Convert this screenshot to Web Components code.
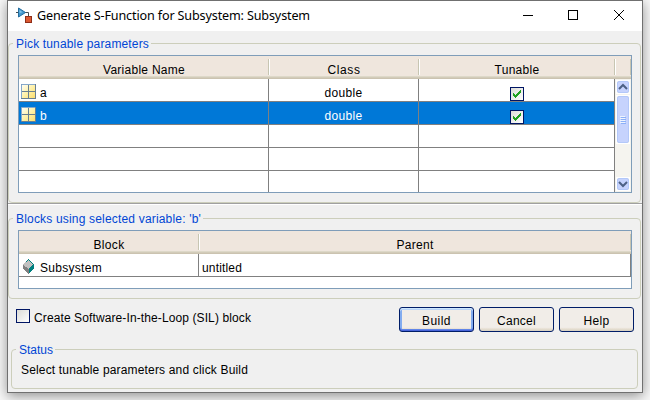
<!DOCTYPE html>
<html lang="en"><head><meta charset="utf-8"><title>Generate S-Function</title>
<style>
html,body{margin:0;width:650px;height:400px;overflow:hidden}
body{background:#f8f8f8;font:12px/15px "Liberation Sans",Arial,sans-serif;color:#000;display:flex;padding-left:7px;box-sizing:border-box}
</style></head><body>
<sfun-window></sfun-window>
<script>
function define(name, html, init) {
  const t = document.createElement('template');
  t.innerHTML = html;
  customElements.define(name, class extends HTMLElement {
    constructor() { super(); this.attachShadow({mode:'open'}).append(t.content.cloneNode(true)); }
    connectedCallback() { if (init) init.call(this, this.shadowRoot); }
  });
}

// Spreads its text evenly to the width given in the "w" attribute.
define('fit-text', `<style>:host{display:inline-block;white-space:pre;flex:none}span{display:inline-block}</style><span><slot></slot></span>`, function (r) {
  const w = +this.getAttribute('w'), s = r.querySelector('span');
  if (!w) return;
  this.style.width = w + 'px';
  const n = this.textContent.length;
  s.style.letterSpacing = (w - s.getBoundingClientRect().width) / n + 'px';
});

define('group-box', `<style>
:host{display:block;box-sizing:border-box;flex:none}
fieldset{margin:0;padding:0;border:1px solid #cccebb;border-radius:4px;height:100%;box-sizing:border-box;min-width:0}
legend{color:#0046d5;margin-left:4px;padding:0 2px 0 3px;height:15px;line-height:16px;white-space:nowrap}
</style><fieldset><legend><slot name="legend"></slot></legend><slot></slot></fieldset>`);

define('check-box', `<style>:host{display:block;width:14px;height:14px;flex:none}svg{display:none}:host([checked]) svg{display:block}
div{width:14px;height:14px;box-sizing:border-box;border:1px solid #001564;background:linear-gradient(135deg,#dcdcd7,#fff)}</style>
<div><svg width="12" height="12" shape-rendering="crispEdges"><path d="M2 5h1v1h1v1h1v-1h1v-1h1v-1h1v-1h1v-1h1v3h-1v1h-1v1h-1v1h-1v1h-1v1h-1v-1h-1v-1h-1z" fill="#21a121"/></svg></div>`);

define('push-button', `<style>:host{display:block;width:75px;height:25px;flex:none}
button{display:block;width:100%;height:100%;box-sizing:border-box;padding:3px 0 0;margin:0;border:1px solid #001d68;border-radius:3px;background:linear-gradient(#f1ede8 0 84%,#e8e1d5 90%,#d6cfbf);font:inherit;color:#000;line-height:15px}
:host([primary]) button{box-shadow:inset 0 1px #cee7ff,inset 0 -1px #4764da,inset 0 2px #b9d4f7,inset 0 -2px #6286e8,inset 2px 0 #83acef,inset -2px 0 #83acef}
</style><button><slot></slot></button>`);

define('head-cell', `<style>:host{display:flex;justify-content:center;position:relative;height:23px;padding-top:7px;box-sizing:border-box;
background:linear-gradient(#efe6dd 0 20px,#ddd8c8 20px 21px,#d2cbb9 21px 22px,#cbc3b0 22px);border:0}
:host::after{content:"";position:absolute;right:-1px;top:3px;width:1px;height:16px;background:#c7c5b2;border-right:1px solid #fff;z-index:1}
:host([last])::after{right:0;border:0}
</style><slot></slot>`);

define('grid-cell', `<style>:host{display:flex;height:23px;box-sizing:border-box;border-right:1px solid #808080;border-bottom:1px solid #808080;padding-top:6px;background:#fff;line-height:16px;overflow:hidden}
:host([center]){justify-content:center}:host([icon]){padding-left:2px;gap:4px}
:host([selected]){background:#0078d7;color:#fff}::slotted(variable-icon){margin-top:-1px}::slotted(block-icon){margin-top:-1px}</style><slot></slot>`);

define('variable-icon', `<style>:host{display:block;width:15px;height:15px}svg{display:block}</style>
<svg width="15" height="15"><defs><linearGradient id="y" x1="0" y1="0" x2="1" y2="1"><stop stop-color="#fffffa"/><stop offset=".5" stop-color="#fff1a8"/><stop offset="1" stop-color="#fbdc6c"/></linearGradient></defs><rect x=".5" y=".5" width="14" height="14" fill="url(#y)" stroke="#687f92"/><path d="M7.5 1v13M1 7.5h13" stroke="#687f92"/><path d="M.5 14V.5H14" fill="none" stroke="#86a9cc"/></svg>`);

define('block-icon', `<style>:host{display:block;width:15px;height:15px}svg{display:block}</style>
<svg width="15" height="15" shape-rendering="crispEdges"><path d="M7.5 0L13 5v4L7.5 15 2 9V5z" fill="#008080"/><path d="M2 5l5.500 5v5L2 9z" fill="#808080"/><path d="M7.500 1L12 5.500 7.500 10 2 5.500z" fill="#c0c0c0"/></svg>`);

define('scroll-bar', `<style>:host{display:flex;flex-direction:column;background:#f5f4ef;width:16px;height:113px;box-sizing:border-box;padding:1px 1px 1px 1px}
div{box-sizing:border-box;width:14px;height:14px;border:1px solid #fff;flex:none}svg{display:block}
.b{height:14px}.t{height:49px;margin-top:1px}.d{margin-top:auto}
i{display:flex;align-items:center;justify-content:center;width:100%;height:100%;box-sizing:border-box;border:1px solid #b3c8f9;border-radius:2px;background:#c6d3fd}</style>
<div class="b"><i><svg width="10" height="8"><path d="M1 6l4-4 4 4" fill="none" stroke="#4d6185" stroke-width="2"/></svg></i></div>
<div class="t"><i><svg width="6" height="8" shape-rendering="crispEdges"><path d="M0 .5h5M0 2.500h5M0 4.500h5M0 6.500h5" stroke="#eef4fe"/><path d="M1 1.500h5M1 3.500h5M1 5.500h5M1 7.500h5" stroke="#8cb0f8"/></svg></i></div>
<div class="b d"><i><svg width="10" height="8"><path d="M1 2l4 4 4-4" fill="none" stroke="#4d6185" stroke-width="2"/></svg></i></div>`);

define('title-bar', `<style>:host{display:flex;height:30px;background:#fff;align-items:center;font:12.6px/16px "Noto Sans","Open Sans",sans-serif;flex:none}
.i{display:block;margin:0 5px 2px 8px}.c{margin-left:auto}</style>
<svg class="i" width="16" height="17"><path d="M0 5.500h3M9 5.500h3.500v4" fill="none" stroke="#454b50"/><path d="M2.500 1v9l7-4.500z" fill="#4297cc" stroke="#236c9d"/><path d="M3.500 3v3l3-.8z" fill="#83c7ed"/><rect x="9.500" y="9.500" width="6" height="6" fill="#db5730" stroke="#8e2e18"/></svg>
<fit-text w="273">Generate S-Function for Subsystem: Subsystem</fit-text>
<svg class="c" width="119" height="30" shape-rendering="crispEdges"><path d="M0 14.500h10" stroke="#000"/><rect x="45.500" y="9.500" width="9" height="9" fill="none" stroke="#000"/><path d="M91 9l10 10M101 9l-10 10" stroke="#000" shape-rendering="auto"/></svg>`);

define('sfun-window', `<style>
:host{display:flex;flex-direction:column;width:636px;height:393px;box-sizing:border-box;border:1px solid #707070;background:#f0f0f0;box-shadow:0 3px 12px rgba(0,0,0,.42)}
.g1{width:633px;height:167px;margin-top:5px}
.split{height:2px;box-sizing:border-box;border-top:1px solid #a0a0a0;background:#fff;flex:none}
.g2{width:633px;height:88px;margin-top:6px}
.table{display:grid;margin:4px 0 0 9px;width:614px;box-sizing:border-box;border:1px solid #7f9db9;background:#fff;overflow:hidden;align-content:start}
.t1{grid-template-columns:250px 150px 196px 16px;height:138px}
.t2{grid-template-columns:180px 432px;height:59px}
scroll-bar{grid-column:4;grid-row:2/7}
.actions{display:flex;height:25px;margin:8px 8px 0 8px;flex:none}
.sil{display:flex;gap:4px;padding-top:2px}.sil fit-text{padding-top:2px}
.btns{display:flex;gap:5px;margin-left:auto}
.g3{width:627px;height:47px;margin:10px 0 0 3px}
.status{padding:6px 0 0 9px}
</style>
<title-bar></title-bar>
<group-box class="g1"><fit-text slot="legend" w="133">Pick tunable parameters</fit-text><div class="table t1"></div></group-box>
<div class="split"></div>
<group-box class="g2"><fit-text slot="legend" w="185">Blocks using selected variable: 'b'</fit-text>
<div class="table t2"><head-cell><fit-text w="31">Block</fit-text></head-cell><head-cell last><fit-text w="37">Parent</fit-text></head-cell>
<grid-cell icon><block-icon></block-icon><fit-text w="62">Subsystem</fit-text></grid-cell><grid-cell style="padding-left:3px"><fit-text w="40">untitled</fit-text></grid-cell></div></group-box>
<div class="actions"><div class="sil"><check-box></check-box><fit-text w="217">Create Software-In-the-Loop (SIL) block</fit-text></div>
<div class="btns"><push-button primary><fit-text w="29">Build</fit-text></push-button><push-button><fit-text w="39">Cancel</fit-text></push-button><push-button><fit-text w="26">Help</fit-text></push-button></div></div>
<group-box class="g3"><fit-text slot="legend" w="34">Status</fit-text><div class="status"><fit-text w="227">Select tunable parameters and click Build</fit-text></div></group-box>`, function (r) {
  let h = '<head-cell><fit-text w="82">Variable Name</fit-text></head-cell><head-cell><fit-text w="33">Class</fit-text></head-cell><head-cell><fit-text w="45">Tunable</fit-text></head-cell><head-cell last></head-cell><scroll-bar></scroll-bar>';
  for (const [name, sel] of [['a', ''], ['b', 'selected']])
    h += `<grid-cell icon ${sel} style="grid-column:1"><variable-icon></variable-icon><fit-text w="7">${name}</fit-text></grid-cell><grid-cell center ${sel}><fit-text w="38">double</fit-text></grid-cell><grid-cell center ${sel}><check-box checked style="margin-top:2px"></check-box></grid-cell>`;
  for (let i = 0; i < 3; i++) h += '<grid-cell style="grid-column:1"></grid-cell><grid-cell></grid-cell><grid-cell></grid-cell>';
  r.querySelector('.t1').innerHTML = h;
});
</script></body></html>
